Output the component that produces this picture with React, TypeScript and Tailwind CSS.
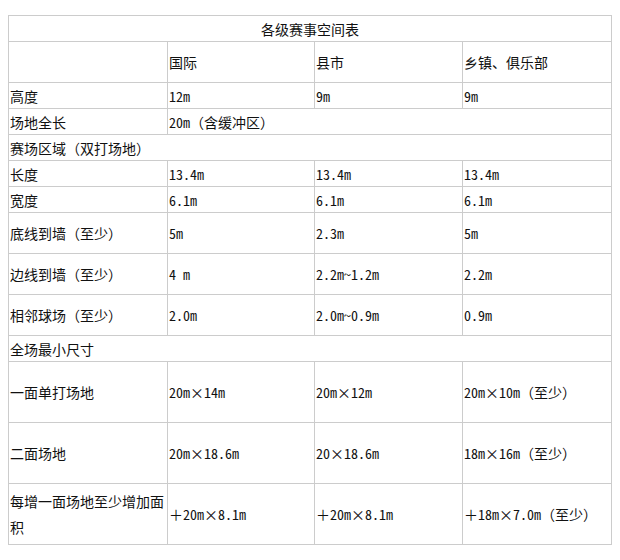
// 各级赛事空间表
const font = {
  fontFamily: '"Noto Sans Mono CJK SC", "Noto Sans CJK SC", "Liberation Mono", monospace',
};

type Row = { h: string; cells: { text: string; span?: number; center?: boolean }[] };

const rows: Row[] = [
  { h: "h-[26px]", cells: [{ text: "各级赛事空间表", span: 4, center: true }] },
  { h: "h-[41px]", cells: [{ text: "" }, { text: "国际" }, { text: "县市" }, { text: "乡镇、俱乐部" }] },
  { h: "h-[26px]", cells: [{ text: "高度" }, { text: "12m" }, { text: "9m" }, { text: "9m" }] },
  { h: "h-[26px]", cells: [{ text: "场地全长" }, { text: "20m（含缓冲区）", span: 3 }] },
  { h: "h-[26px]", cells: [{ text: "赛场区域（双打场地）", span: 4 }] },
  { h: "h-[26px]", cells: [{ text: "长度" }, { text: "13.4m" }, { text: "13.4m" }, { text: "13.4m" }] },
  { h: "h-[26px]", cells: [{ text: "宽度" }, { text: "6.1m" }, { text: "6.1m" }, { text: "6.1m" }] },
  { h: "h-[41px]", cells: [{ text: "底线到墙（至少）" }, { text: "5m" }, { text: "2.3m" }, { text: "5m" }] },
  { h: "h-[41px]", cells: [{ text: "边线到墙（至少）" }, { text: "4 m" }, { text: "2.2m~1.2m" }, { text: "2.2m" }] },
  { h: "h-[41px]", cells: [{ text: "相邻球场（至少）" }, { text: "2.0m" }, { text: "2.0m~0.9m" }, { text: "0.9m" }] },
  { h: "h-[26px]", cells: [{ text: "全场最小尺寸", span: 4 }] },
  { h: "h-[61px]", cells: [{ text: "一面单打场地" }, { text: "20m×14m" }, { text: "20m×12m" }, { text: "20m×10m（至少）" }] },
  { h: "h-[61px]", cells: [{ text: "二面场地" }, { text: "20m×18.6m" }, { text: "20×18.6m" }, { text: "18m×16m（至少）" }] },
  { h: "h-[61px]", cells: [{ text: "每增一面场地至少增加面积" }, { text: "＋20m×8.1m" }, { text: "＋20m×8.1m" }, { text: "＋18m×7.0m（至少）" }] },
];

export default function App() {
  return (
    <div className="w-[620px] h-[560px] bg-white pt-[15px] pl-[8px]" style={font}>
      <table className="table-fixed border-collapse w-[603px] text-[14px] leading-[20px] text-[#111]">
        <colgroup>
          <col className="w-[159px]" />
          <col className="w-[147px]" />
          <col className="w-[148px]" />
          <col className="w-[149px]" />
        </colgroup>
        <tbody>
          {rows.map((r, i) => (
            <tr key={i} className={r.h}>
              {r.cells.map((c, j) => (
                <td
                  key={j}
                  colSpan={c.span}
                  className={
                    "border border-[#cccccc] px-[1px] py-0 align-middle break-all " +
                    (c.center ? "text-center" : "text-left") +
                    (c.text.length > 10 && !c.span ? " leading-[26px]" : "")
                  }
                >
                  {c.text}
                </td>
              ))}
            </tr>
          ))}
        </tbody>
      </table>
    </div>
  );
}
